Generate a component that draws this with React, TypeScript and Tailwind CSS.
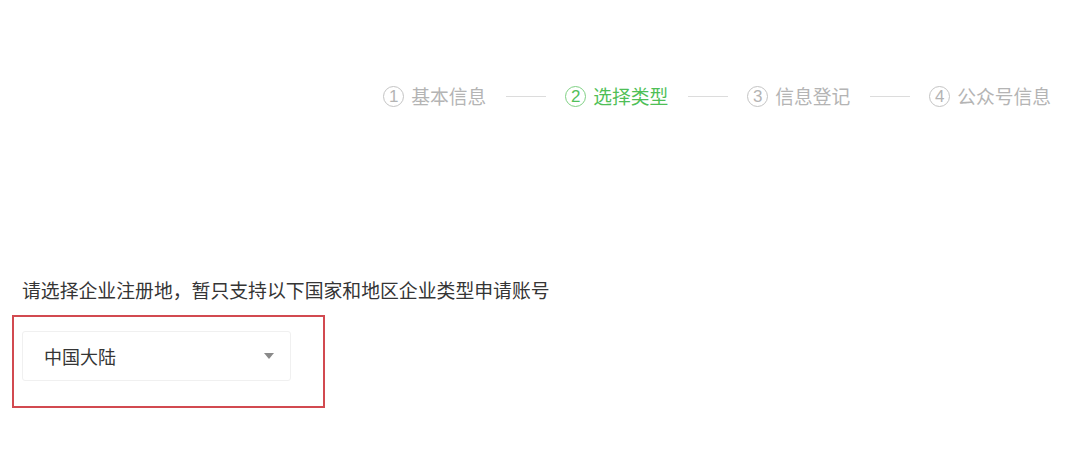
const steps = [
  { num: "1", label: "基本信息", active: false },
  { num: "2", label: "选择类型", active: true },
  { num: "3", label: "信息登记", active: false },
  { num: "4", label: "公众号信息", active: false },
];

function Step({ num, label, active }: { num: string; label: string; active: boolean }) {
  const color = active ? "text-[#52c05a] border-[#7fd184]" : "text-[#b4b4b4] border-[#c4c4c4]";
  return (
    <div className={`flex items-center gap-[7px] ${active ? "text-[#4fbf57]" : "text-[#b4b4b4]"}`}>
      <span
        className={`flex h-[21px] w-[21px] items-center justify-center rounded-full border text-[17px] leading-none ${color}`}
        style={{ fontFamily: "'Liberation Sans', Arial, sans-serif" }}
      >
        {num}
      </span>
      <span className="text-[18.75px] leading-[22px]">{label}</span>
    </div>
  );
}

export default function App() {
  return (
    <main
      className="h-[451px] w-[1080px] overflow-hidden bg-white"
      style={{ fontFamily: "'Noto Sans CJK SC', 'Noto Sans', sans-serif" }}
    >
      <div className="flex items-center justify-end pr-[29px] pt-[85px]">
        {steps.map((s, i) => (
          <div key={s.num} className="flex items-center">
            {i > 0 && <div className="ml-[20px] mr-[19px] h-px w-[40px] bg-[#dcdcdc]" />}
            <Step {...s} />
          </div>
        ))}
      </div>

      <p className="ml-[22px] mt-[171px] text-[18.85px] leading-[24px] text-[#353535]">
        请选择企业注册地，暂只支持以下国家和地区企业类型申请账号
      </p>

      <div className="ml-[12px] mt-[13px] w-[313px] border-2 border-[#d24a50] pb-[25px] pl-[8px] pr-[32px] pt-[14px]">
        <div className="flex h-[50px] w-[269px] items-center justify-between rounded-[3px] border border-[#f0f0f0] pl-[21px] pr-[16px]">
          <span className="text-[18px] text-[#353535]">中国大陆</span>
          <svg width="10" height="6" viewBox="0 0 10 6">
            <path d="M0 0 L10 0 L5 6 Z" fill="#8a8a8a" />
          </svg>
        </div>
      </div>
    </main>
  );
}
